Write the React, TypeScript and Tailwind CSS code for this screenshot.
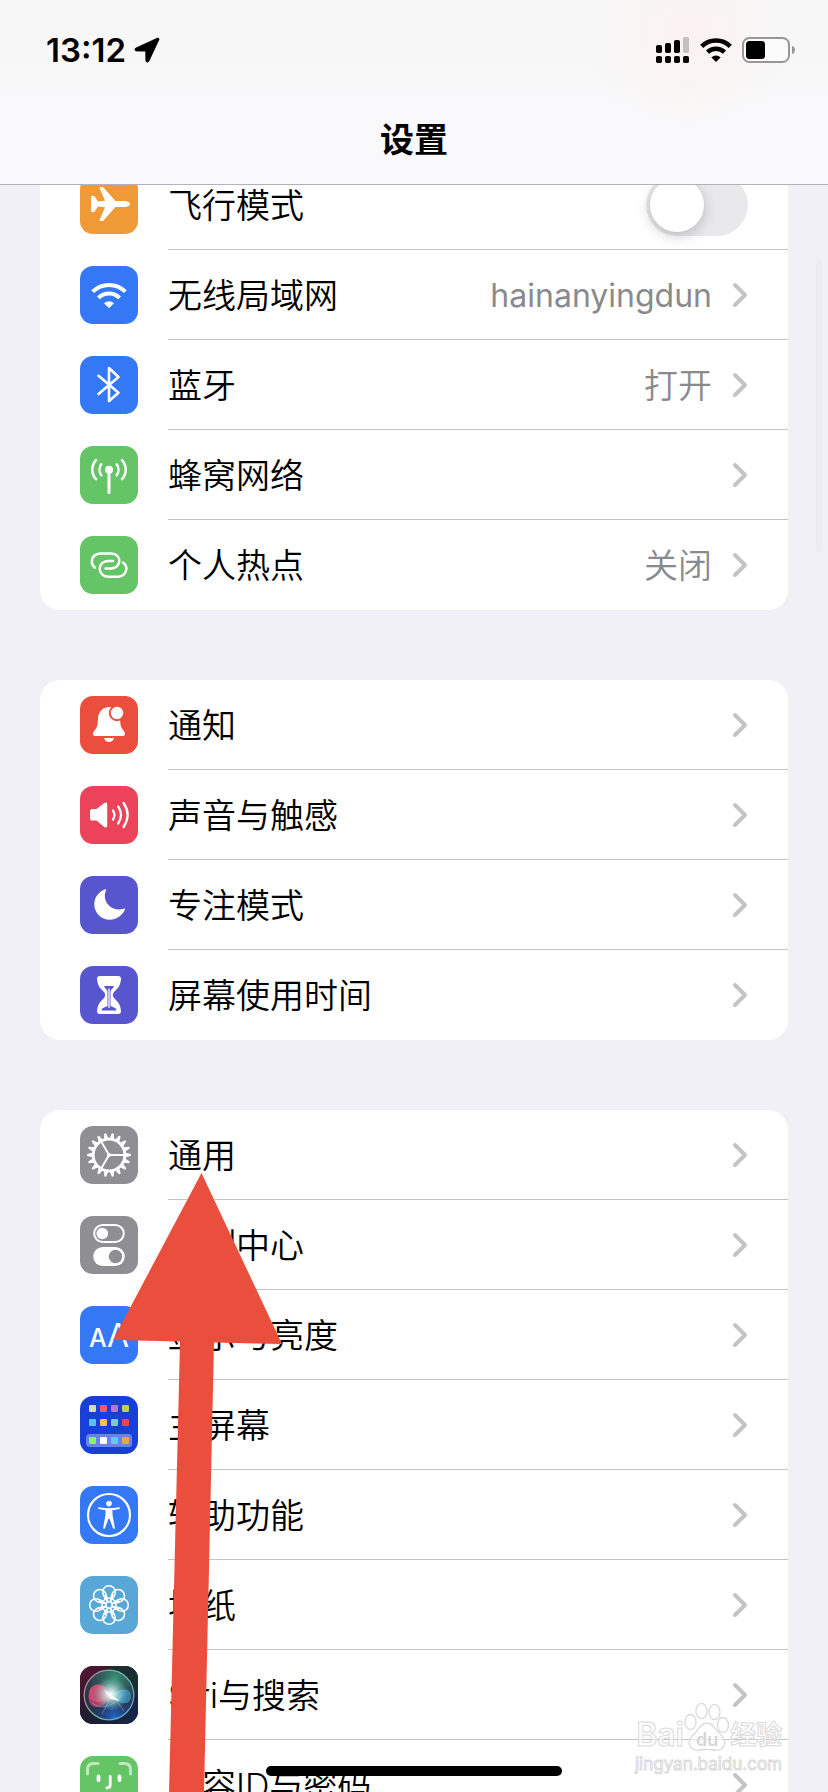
import type { ReactNode } from "react";

type Row = {
  label: string;
  tile: string;
  icon: ReactNode;
  value?: string;
  latin?: boolean;
  toggle?: boolean;
};

function Glyph({ children }: { children: ReactNode }) {
  return (
    <svg viewBox="0 0 58 58" className="block size-full" aria-hidden="true">
      {children}
    </svg>
  );
}

function Line({ d, width = 2.5, opacity = 1 }: { d: string; width?: number; opacity?: number }) {
  return (
    <path
      d={d}
      fill="none"
      stroke="#fff"
      strokeWidth={width}
      strokeOpacity={opacity}
      strokeLinecap="round"
      strokeLinejoin="round"
    />
  );
}

const Airplane = (
  <Glyph>
    <path
      fill="#fff"
      d="M50 28c0 1.8-3 3-5.5 3h-9L23.5 44.5c-.4.4-.8.6-1.3.6h-1.4c-.9 0-1.3-.7-1-1.5L25 31.2l-7-.6-3.4 5c-.3.4-.6.6-1.1.6h-1.2c-.7 0-1.2-.5-1.2-1.2V21c0-.7.5-1.2 1.2-1.2h1.2c.5 0 .8.2 1.1.6l3.4 5 7-.6-5.2-12.3c-.3-.8.1-1.5 1-1.5h1.4c.5 0 .9.2 1.3.6L35.5 25h9c2.5 0 5.5 1.2 5.5 3z"
    />
  </Glyph>
);

const Wifi = (
  <Glyph>
    <g fill="none" stroke="#fff" strokeWidth="4">
      <path d="M12.7 25.7a23 23 0 0 1 32.6 0" />
      <path d="M18.4 31.9a15 15 0 0 1 21.2 0" />
    </g>
    <path fill="#fff" d="M29 42.3l-5-5a7.1 7.1 0 0 1 10 0z" />
  </Glyph>
);

const Bluetooth = (
  <Glyph>
    <Line width={2.6} d="M18.5 19.8 38.5 36.7 29 45V12l9.5 9-20 17" />
  </Glyph>
);

const Cellular = (
  <Glyph>
    <circle cx="29" cy="23.7" r="4" fill="#fff" />
    <Line width={3} d="M29 24v22.5" />
    <Line d="M36.7 18.2c2.4 3.2 2.4 7.8 0 11M21.3 18.2c-2.4 3.2-2.4 7.8 0 11M42 14.2c5 5.6 5 13.4 0 19M16 14.2c-5 5.6-5 13.4 0 19" />
  </Glyph>
);

const Hotspot = (
  <Glyph>
    <Line d="M15 31.7c-2.2-1.5-3.2-3.7-3.2-6.2 0-4.5 3.6-8.1 8.2-8.1h11.500c4.400 0 7.800 3.300 7.800 7.500s-3.400 7.500-7.800 7.500h-6" />
    <Line d="M43 26.5c2.2 1.5 3.4 3.6 3.4 6.1 0 4.500-3.600 8.100-8.200 8.100H28c-4.800 0-8.300-3.500-8.300-7.900 0-4.400 3.500-7.900 8.300-7.900h5" />
  </Glyph>
);

const Bell = (
  <Glyph>
    <path
      fill="#fff"
      d="M29 11c-6 .2-10.5 4.5-11 11l-.4 5.5c-.2 3-1.2 4.5-3.4 7.5-.9 1.2-1.2 2-1.2 3 0 1.3.8 2 2.3 2h27.4c1.5 0 2.3-.7 2.3-2 0-1-.3-1.8-1.2-3-2.2-3-3.2-4.5-3.4-7.5L40 22c-.5-6.5-5-10.8-11-11z"
    />
    <circle cx="37" cy="17" r="7.2" fill="#fff" stroke="#eb4e3d" strokeWidth="2" />
    <path fill="#fff" d="M24 42h10c-.5 2.6-2.5 4-5 4s-4.500-1.400-5-4z" />
  </Glyph>
);

const Speaker = (
  <Glyph>
    <path
      fill="#fff"
      d="M12.5 23h4l7.800-6c1.500-1.100 2.900-.5 2.900 1.200v21.600c0 1.700-1.400 2.300-2.900 1.200l-7.800-6.500h-4c-1.700 0-2.500-.9-2.500-2.600v-6.300c0-1.700.8-2.600 2.500-2.600z"
    />
    <Line
      width={2.3}
      d="M33 24.5c1.9 2.9 1.9 6.1 0 9M38.2 20.5c3.6 5.4 3.6 11.6 0 17M43.6 17c5.1 7.6 5.1 16.4 0 24"
    />
  </Glyph>
);

const Moon = (
  <Glyph>
    <path
      fill="#fff"
      d="M25.3 13.2C18.8 15.5 14.3 21.2 14.3 28.2c0 8.700 6.800 15.500 15.600 15.500 6.600 0 12.600-4.300 15-10.200.3-.7-.2-1.200-.9-.9-1.600.6-3 .9-4.900.9-8 0-14.300-5.800-14.300-13.700 0-2 .4-3.600 1.200-5.200.4-.9 0-1.600-.7-1.400z"
    />
  </Glyph>
);

const Hourglass = (
  <Glyph>
    <path
      fill="#fff"
      d="M20 10h18c2 0 3.2 1 3 3-.4 4.5-1.5 7.5-4.3 10.3L34 26c-1.6 1.6-1.6 4.4 0 6l2.7 2.7c2.8 2.8 3.9 5.8 4.3 10.3.2 2-1 3-3 3H20c-2 0-3.2-1-3-3 .4-4.5 1.5-7.500 4.300-10.300L24 32c1.600-1.600 1.600-4.400 0-6l-2.700-2.700C18.500 20.500 17.400 17.500 17 13c-.2-2 1-3 3-3z"
    />
    <path
      fill="#5756ce"
      d="M24 20h10c-.5 1.3-1.3 2.2-2.3 3.2-.9.9-1.2 1.8-1.2 3V40l4.5 2c.9.5 1.3 1.2 1.3 2.6H21.700c0-1.400.4-2.100 1.300-2.600l4.500-2V26.200c0-1.200-.3-2.100-1.200-3-1-1-1.800-1.900-2.300-3.200z"
    />
    <path d="M29 22.5V42" stroke="#fff" strokeWidth="1.3" />
  </Glyph>
);

const toothAngles = Array.from({ length: 18 }, (_, i) => i * 20 + 10);

const Gear = (
  <Glyph>
    <g fill="#fff">
      {toothAngles.map((a) => (
        <path key={a} d="M26.6 13 28 7.3q1-.6 2 0L31.4 13z" transform={`rotate(${a} 29 29)`} />
      ))}
    </g>
    <circle cx="29" cy="29" r="15.8" fill="none" stroke="#fff" strokeWidth="2.8" />
    <path d="M29 29h15M29 29l-7.5-13M29 29l-7.5 13" stroke="#fff" strokeWidth="1.9" />
    <circle cx="29" cy="29" r="2" fill="#fff" />
  </Glyph>
);

const Switches = (
  <Glyph>
    <rect x="14.2" y="9" width="29.6" height="17" rx="8.5" fill="none" stroke="#fff" strokeWidth="2" />
    <circle cx="22.3" cy="17.5" r="5.8" fill="#fff" />
    <rect x="13.2" y="31" width="31.6" height="19" rx="9.5" fill="#fff" />
    <circle cx="35.5" cy="40.5" r="6.7" fill="#8e8e93" />
  </Glyph>
);

const Letters = (
  <Glyph>
    <text x="9" y="41" fill="#fff" fontFamily="Inter, sans-serif" fontSize="25" fontWeight="500">
      A
    </text>
    <text x="27" y="41" fill="#fff" fontFamily="Inter, sans-serif" fontSize="32" fontWeight="400">
      A
    </text>
  </Glyph>
);

const apps = [
  [9, 9, "#d9d6d0"],
  [20, 9, "#f05b69"],
  [31, 9, "#b574f2"],
  [42, 9, "#b9d050"],
  [9, 23, "#5bc0f5"],
  [20, 23, "#f9c440"],
  [31, 23, "#74d5a6"],
  [42, 23, "#ea4a3a"],
  [9, 41, "#86ef7f"],
  [20, 41, "#ffffff"],
  [31, 41, "#5fcbfa"],
  [42, 41, "#f2a057"],
] as const;

const HomeGrid = (
  <Glyph>
    <rect x="6" y="38" width="46" height="13" rx="3.5" fill="#fff" fillOpacity=".35" />
    {apps.map(([x, y, color]) => (
      <rect key={`${x}-${y}`} x={x} y={y} width="7" height="7" rx="1.3" fill={color} />
    ))}
  </Glyph>
);

const Person = (
  <Glyph>
    <circle cx="29" cy="29" r="21" fill="none" stroke="#fff" strokeWidth="2.2" />
    <circle cx="29" cy="17.6" r="2.8" fill="#fff" />
    <Line width={1.9} d="M19 22.1c6.5 1.5 13.5 1.5 20 0" />
    <path
      fill="#fff"
      d="M25.5 22.5h7c-.2 4 .1 8 .9 11l1.4 8.2c.2 1.2-1.5 1.7-1.9.4L29.7 33h-1.4l-3.2 9.1c-.4 1.3-2.1.8-1.9-.4l1.4-8.2c.8-3 1.1-7 .9-11z"
    />
  </Glyph>
);

const petalAngles = [0, 45, 90, 135, 180, 225, 270, 315];

const Flower = (
  <Glyph>
    <g fill="none" stroke="#fff" strokeWidth="1.6" strokeLinejoin="round">
      {petalAngles.map((a) => (
        <g key={a} transform={`rotate(${a} 29 29)`}>
          <circle cx="29" cy="16" r="6.3" />
          <path d="M28 26 23.6 19.5M30 26l4.4-6.5" />
        </g>
      ))}
      <circle cx="29" cy="29" r="3.2" />
    </g>
  </Glyph>
);

const Siri = (
  <Glyph>
    <defs>
      <linearGradient id="siri-base" x1="0" y1="0" x2="1" y2="1">
        <stop offset="0" stopColor="#5c1530" />
        <stop offset=".5" stopColor="#1c1c30" />
        <stop offset="1" stopColor="#14284c" />
      </linearGradient>
      <radialGradient id="siri-green" cx=".62" cy=".15" r=".7">
        <stop offset="0" stopColor="#3a9c7c" stopOpacity=".9" />
        <stop offset="1" stopColor="#2c5c60" stopOpacity="0" />
      </radialGradient>
      <radialGradient id="siri-blue" cx=".6" cy=".95" r=".55">
        <stop offset="0" stopColor="#2168d0" />
        <stop offset="1" stopColor="#12305e" stopOpacity="0" />
      </radialGradient>
      <radialGradient id="siri-glow">
        <stop offset="0" stopColor="#fff" />
        <stop offset=".25" stopColor="#dffcf8" stopOpacity=".8" />
        <stop offset="1" stopColor="#8adfd0" stopOpacity="0" />
      </radialGradient>
      <linearGradient id="siri-rim" x1="0" y1=".2" x2="1" y2=".8">
        <stop offset="0" stopColor="#d98a9c" />
        <stop offset=".45" stopColor="#7fd0b0" />
        <stop offset="1" stopColor="#6fb0ea" />
      </linearGradient>
    </defs>
    <rect width="58" height="58" fill="url(#siri-base)" />
    <rect x="29" width="29" height="29" fill="#143a30" fillOpacity=".6" />
    <circle cx="29" cy="29" r="25" fill="#2b3244" />
    <circle cx="29" cy="29" r="25" fill="url(#siri-green)" />
    <circle cx="29" cy="29" r="25" fill="url(#siri-blue)" />
    <path d="M31 30C25 14 9 15 8.5 30S23 45 31 30z" fill="#d8406f" fillOpacity=".75" />
    <path d="M10 23c7-8 16-4 21 6-6 9-16 9-22 3z" fill="#f0708e" fillOpacity=".35" />
    <path d="M31 30c6-7 20-10 20 0s-12 9-20 0z" fill="#3fa8e8" fillOpacity=".6" />
    <path d="M12 37c10 7 22 4 30-9" fill="none" stroke="#5ed0cc" strokeOpacity=".5" />
    <path d="M33 30l11 15M31 31l-9 17" stroke="#e58ac0" strokeOpacity=".5" />
    <circle cx="31" cy="28" r="17" fill="url(#siri-glow)" />
    <path d="M24 24l16 11-9-2z" fill="#fff" />
    <circle cx="29" cy="29" r="24.8" fill="none" stroke="url(#siri-rim)" strokeOpacity=".85" strokeWidth="1.3" />
  </Glyph>
);

const Face = (
  <Glyph>
    <Line
      width={3}
      opacity={0.6}
      d="M7.5 18v-4.5c0-4 2-6 6-6H18M40 7.5h4.500c4 0 6 2 6 6V18M7.5 40v4.500c0 4 2 6 6 6H18M40 50.500h4.500c4 0 6-2 6-6V40"
    />
    <Line width={3.8} d="M18.5 20.5v3.5M39.5 20.5v3.5" />
    <Line width={2.8} d="M30.2 20.5v8.5c0 2-1 3-3.4 3" />
    <Line d="M20 40c5 4.5 13 4.5 18 0" />
  </Glyph>
);

const groups: Row[][] = [
  [
    { label: "飞行模式", tile: "bg-[#f09a37]", icon: Airplane, toggle: true },
    { label: "无线局域网", tile: "bg-[#3478f6]", icon: Wifi, value: "hainanyingdun", latin: true },
    { label: "蓝牙", tile: "bg-[#3478f6]", icon: Bluetooth, value: "打开" },
    { label: "蜂窝网络", tile: "bg-[#65c466]", icon: Cellular },
    { label: "个人热点", tile: "bg-[#65c466]", icon: Hotspot, value: "关闭" },
  ],
  [
    { label: "通知", tile: "bg-[#eb4e3d]", icon: Bell },
    { label: "声音与触感", tile: "bg-[#eb445a]", icon: Speaker },
    { label: "专注模式", tile: "bg-[#5756ce]", icon: Moon },
    { label: "屏幕使用时间", tile: "bg-[#5756ce]", icon: Hourglass },
  ],
  [
    { label: "通用", tile: "bg-[#8e8e93]", icon: Gear },
    { label: "控制中心", tile: "bg-[#8e8e93]", icon: Switches },
    { label: "显示与亮度", tile: "bg-[#3478f6]", icon: Letters },
    { label: "主屏幕", tile: "bg-[#1840d8]", icon: HomeGrid },
    { label: "辅助功能", tile: "bg-[#3478f6]", icon: Person },
    { label: "墙纸", tile: "bg-[#59a7d7]", icon: Flower },
    { label: "Siri与搜索", tile: "bg-[#1c1c30]", icon: Siri },
    { label: "面容ID与密码", tile: "bg-[#65c466]", icon: Face },
  ],
];

function Chevron() {
  return (
    <svg viewBox="0 0 16 26" className="h-[26px] w-4 shrink-0" aria-hidden="true">
      <path
        d="M3 3l10 10L3 23"
        fill="none"
        stroke="#c4c4c6"
        strokeWidth="4"
        strokeLinecap="round"
        strokeLinejoin="round"
      />
    </svg>
  );
}

function SettingRow({ row, last }: { row: Row; last: boolean }) {
  const body = (
    <>
      <span className={`size-[58px] shrink-0 overflow-hidden rounded-[13px] ${row.tile}`}>{row.icon}</span>
      <span
        className={`flex h-full min-w-0 flex-1 items-center gap-5 border-b pr-10 ${
          last ? "border-transparent" : "border-[#c5c5c7]"
        }`}
      >
        <span className="flex-1 truncate pt-0.5 text-black">{row.label}</span>
        {row.value && (
          <span className={`pt-0.5 text-[#8a8a8e] ${row.latin ? "text-[32px] font-normal" : ""}`}>{row.value}</span>
        )}
        {row.toggle ? (
          <input
            type="checkbox"
            role="switch"
            className="h-[62px] w-[102px] shrink-0 appearance-none rounded-full bg-[#e9e9eb] p-1 before:block before:size-[54px] before:rounded-full before:bg-white before:shadow-[0_4px_14px_rgba(0,0,0,0.2)] checked:bg-[#65c466] checked:before:ml-auto"
          />
        ) : (
          <Chevron />
        )}
      </span>
    </>
  );
  const layout = "flex h-[90px] items-center gap-[30px] pl-10";
  return (
    <li>
      {row.toggle ? (
        <label className={layout}>{body}</label>
      ) : (
        <a href="#" className={layout}>
          {body}
        </a>
      )}
    </li>
  );
}

function StatusBar() {
  return (
    <div className="flex h-[100px] items-center justify-between pr-8 pl-[46px]">
      <div className="flex items-center gap-2">
        <span className="text-[33px] leading-10 font-semibold">13:12</span>
        <svg viewBox="0 0 26 26" className="size-[26px]" aria-hidden="true">
          <path
            d="M23.3 1.2 1.8 11.1c-1.5.8-1.1 2.9.6 2.9l9.3.1.2 9.5c0 1.800 2.100 2.200 2.900.6L24.900 2.800c.5-1.100-.5-2.100-1.600-1.600z"
            fill="#000"
            stroke="#000"
            strokeWidth=".8"
          />
        </svg>
      </div>
      <div className="flex items-center gap-[10px]">
        <svg viewBox="0 0 34 28" className="h-7 w-[34px]" aria-hidden="true">
          <rect x="0" y="9" width="6" height="8" rx="1.8" />
          <rect x="9" y="7" width="6" height="10" rx="1.8" />
          <rect x="18" y="4" width="6" height="13" rx="1.8" />
          <rect x="27" y="1" width="6" height="16" rx="1.8" fill="#c4c1c1" />
          <rect x="0" y="20" width="6" height="7" rx="1.8" />
          <rect x="9" y="20" width="6" height="7" rx="1.8" />
          <rect x="18" y="20" width="6" height="7" rx="1.8" />
          <rect x="27" y="20" width="6" height="7" rx="1.8" />
        </svg>
        <svg viewBox="0 0 32 26" className="h-[26px] w-8" aria-hidden="true">
          <g fill="none" stroke="#000" strokeWidth="4.4">
            <path d="M1.7 9.3a20.5 20.5 0 0 1 28.6 0" />
            <path d="M7.5 15.2a12.3 12.3 0 0 1 17 0" />
          </g>
          <path d="M16 25l-4.6-4.6a6.5 6.5 0 0 1 9.2 0z" />
        </svg>
        <svg viewBox="0 0 54 26" className="h-[26px] w-[54px]" aria-hidden="true">
          <rect x="1" y="1" width="46" height="24" rx="6.5" fill="#fff" fillOpacity=".5" stroke="#989698" strokeWidth="2" />
          <rect x="4" y="4" width="19" height="18" rx="3.5" />
          <path d="M50 9c4 1 4 7 0 8z" fill="#989698" />
        </svg>
      </div>
    </div>
  );
}

function Watermark() {
  return (
    <div
      className="pointer-events-none absolute right-[46px] bottom-4 z-20 text-white/60 [-webkit-text-stroke:1px_#dadada]"
      lang="zh"
    >
      <div className="flex h-[50px] items-end justify-end">
        <span className="text-[32px] leading-[34px] font-semibold">Bai</span>
        <svg viewBox="0 0 46 50" className="h-[50px] w-[46px]" aria-hidden="true">
          <g fill="#fff" fillOpacity=".6" stroke="#dadada" strokeWidth="1.3">
            <ellipse cx="6.5" cy="20" rx="5.5" ry="7.5" />
            <ellipse cx="17.5" cy="9" rx="5.5" ry="7.7" />
            <ellipse cx="30.5" cy="10" rx="5.5" ry="7.7" />
            <ellipse cx="39" cy="23" rx="5.5" ry="7.5" />
            <path d="M23 21c-6 0-8 6-12 10-4 3.5-6.5 7-5.5 11.5 1.2 5 6 6.5 10.5 5.5 5-1 9-1 14 0 4.5 1 9.3-.5 10.5-5.5 1-4.5-1.500-8-5.500-11.500-4-4-6-10-12-10z" />
          </g>
          <text x="12" y="44" fontFamily="Inter, sans-serif" fontSize="18" fontWeight="600" fill="#d6d6d6">
            du
          </text>
        </svg>
        <span className="text-[26px] leading-[34px] font-bold">经验</span>
      </div>
      <div className="text-right text-[17px] leading-6 font-normal">jingyan.baidu.com</div>
    </div>
  );
}

export default function App() {
  return (
    <div className="relative h-screen overflow-hidden bg-[#f1f0f6] font-['Inter','Noto_Sans_CJK_SC',sans-serif] text-[34px] leading-[48px] font-[350] text-black">
      <header className="relative z-10 border-b border-[#b2b1b5] bg-[#f9f9fb] bg-[radial-gradient(circle_at_83%_20%,#fbf2f1_0,transparent_100px),linear-gradient(to_bottom,#f6f6f6,#f9f9fb_70%)]">
        <StatusBar />
        <h1 className="flex h-[84px] items-center justify-center pb-1 text-[34px] font-bold">设置</h1>
      </header>
      <main className="-mt-[25px] flex flex-col gap-[70px] px-10">
        {groups.map((rows) => (
          <ul key={rows[0].label} className="overflow-hidden rounded-[20px] bg-white">
            {rows.map((row, i) => (
              <SettingRow key={row.label} row={row} last={i === rows.length - 1} />
            ))}
          </ul>
        ))}
      </main>
      <div className="absolute top-[259px] right-[6px] h-[293px] w-[6px] rounded-full bg-[#ebebf1]" />
      <Watermark />
      <svg
        viewBox="0 0 170 620"
        className="pointer-events-none absolute top-[1173px] left-[113px] z-10 h-[620px] w-[170px]"
        aria-hidden="true"
      >
        <path d="M88.5 0 169 171 101 169.5 91 620H56L67 168.5 0 167z" fill="#ea4e3d" />
      </svg>
      <div className="absolute inset-x-0 bottom-4 z-20 mx-auto h-[10px] w-[296px] rounded-full bg-black" />
    </div>
  );
}
